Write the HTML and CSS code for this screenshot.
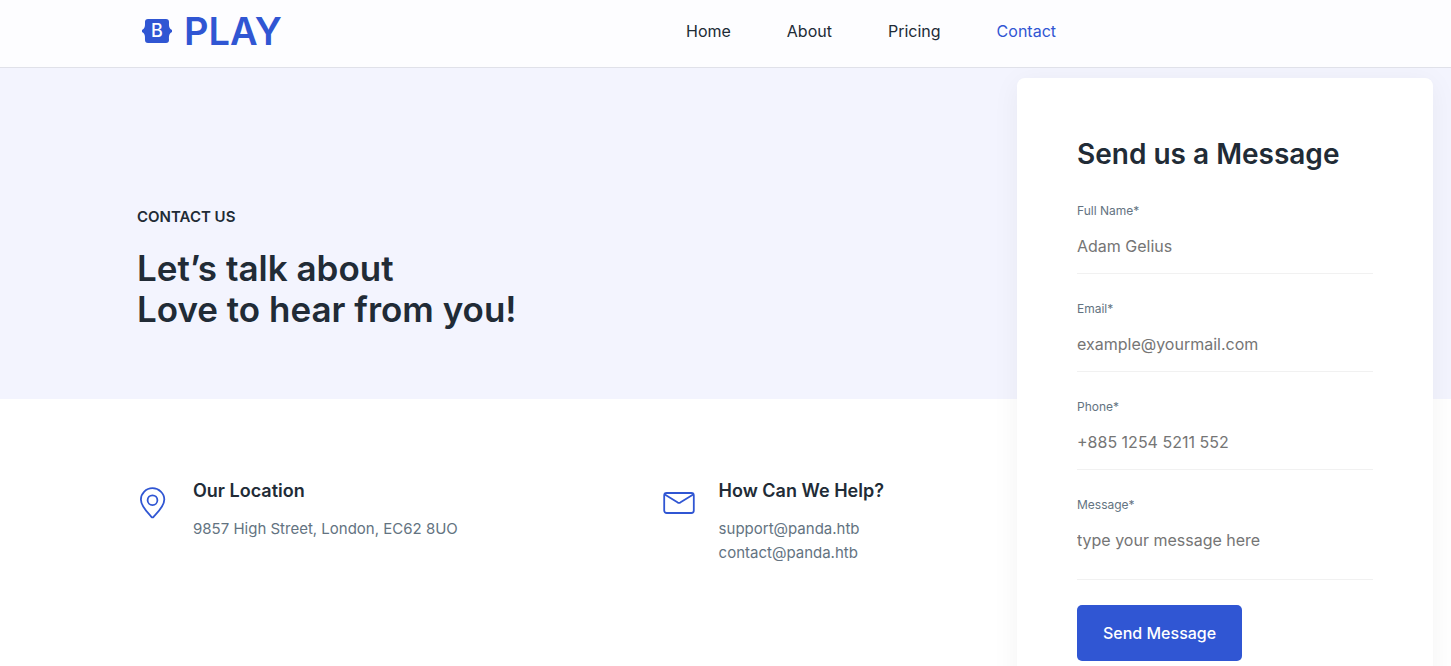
FILE: index.html
```html
<!DOCTYPE html>
<html lang="en">
<head>
<meta charset="utf-8">
<meta name="viewport" content="width=device-width, initial-scale=1">
<title>Play - Contact</title>
<link rel="stylesheet" href="styles.css">
</head>
<body>
<header class="header">
  <a class="logo" href="#" aria-label="Play">
    <svg class="logo-mark" viewBox="0 0 30 24" aria-hidden="true">
      <path d="M6 0H24Q27 0 27 3C27 6 26.500 9.500 30 11V13C26.500 14.500 27 18 27 21Q27 24 24 24H6Q3 24 3 21C3 18 3.500 14.500 0 13V11C3.500 9.500 3 6 3 3Q3 0 6 0Z" fill="#3056d3"/>
      <text class="mark-letter" x="15" y="18" text-anchor="middle">B</text>
    </svg>
    <span class="logo-name">PLAY</span>
  </a>
  <nav class="nav">
    <a href="#">Home</a>
    <a href="#">About</a>
    <a href="#">Pricing</a>
    <a class="active" href="#">Contact</a>
  </nav>
</header>
<main class="main">
  <div class="contact">
    <div class="content">
      <div class="intro">
        <p class="eyebrow">CONTACT US</p>
        <h1 class="title">Let’s talk about<br>Love to hear from you!</h1>
      </div>
      <div class="info">
        <section class="info-item">
          <svg class="info-icon" viewBox="0 0 32 32" aria-hidden="true">
            <path d="M15.500 1.200C9 1.200 3.900 6.300 3.900 12.500C3.900 19.200 10.500 25.600 14.400 29.800Q15.500 31 16.600 29.800C20.500 25.600 27.300 19.200 27.300 12.500C27.300 6.300 22 1.200 15.500 1.200Z"/>
            <circle cx="15.500" cy="13.200" r="4.900"/>
          </svg>
          <div>
            <h2 class="info-title">Our Location</h2>
            <p class="info-text">9857 High Street, London, EC62 8UO</p>
          </div>
        </section>
        <section class="info-item">
          <svg class="info-icon" viewBox="0 0 32 32" aria-hidden="true">
            <rect x="1.200" y="6" width="29.600" height="20" rx="2.500"/>
            <path d="M1.800 7.500L14.800 15.600Q16 16.300 17.200 15.600L30.200 7.500"/>
          </svg>
          <div>
            <h2 class="info-title">How Can We Help?</h2>
            <p class="info-text">support@panda.htb<br>contact@panda.htb</p>
          </div>
        </section>
      </div>
    </div>
    <form class="card">
      <h2 class="card-title">Send us a Message</h2>
      <div class="field">
        <label for="name">Full Name*</label>
        <input id="name" type="text" placeholder="Adam Gelius">
      </div>
      <div class="field">
        <label for="email">Email*</label>
        <input id="email" type="email" placeholder="example@yourmail.com">
      </div>
      <div class="field">
        <label for="phone">Phone*</label>
        <input id="phone" type="tel" placeholder="+885 1254 5211 552">
      </div>
      <div class="field">
        <label for="message">Message*</label>
        <textarea id="message" rows="1" placeholder="type your message here"></textarea>
      </div>
      <button class="submit" type="button">Send Message</button>
    </form>
  </div>
</main>
</body>
</html>
```
FILE: styles.css
```css
* {
  box-sizing: border-box;
  margin: 0;
}

body {
  display: flex;
  flex-direction: column;
  height: 100vh;
  font-family: Inter, sans-serif;
  color: #212b36;
  background: #fff;
}

.header {
  display: flex;
  flex: none;
  align-items: center;
  justify-content: space-between;
  padding: 8px 395px 13px 142px;
  background: #fdfdff;
  border-bottom: 1px solid #e0e1e9;
}

.logo {
  display: flex;
  align-items: center;
  gap: 12px;
  color: #3056d3;
  text-decoration: none;
}

.logo-mark {
  width: 30px;
  height: 24px;
}

.mark-letter {
  font-size: 18px;
  font-weight: 500;
  fill: #fff;
}

.logo-name {
  font-size: 38px;
  font-weight: 600;
  line-height: 46px;
}

.nav {
  display: flex;
  gap: 56px;
}

.nav a {
  color: #212b36;
  font-size: 16px;
  line-height: 24px;
  text-decoration: none;
}

.nav a.active {
  color: #3056d3;
}

.main {
  flex: 1;
  min-height: 0;
  overflow-y: auto;
  scrollbar-width: none;
}

.contact {
  display: grid;
  grid-template-columns: minmax(0, 1fr) 416px;
  padding: 10px 18px 60px 137px;
  background: linear-gradient(#f3f4fe 331px, #fff 331px);
}

.content {
  padding: 130px 4px 0 0;
}

.eyebrow {
  margin-bottom: 22px;
  font-size: 15px;
  font-weight: 600;
  line-height: 18px;
}

.title {
  font-size: 35px;
  font-weight: 600;
  line-height: 41px;
}

.info {
  display: grid;
  grid-template-columns: 3fr 2fr;
  margin-top: 150px;
}

.info-item {
  display: flex;
  gap: 24px;
}

.info-icon {
  flex: none;
  width: 32px;
  height: 32px;
  margin-top: 7px;
  fill: none;
  stroke: #3056d3;
  stroke-width: 1.8;
}

.info-title {
  margin-bottom: 15px;
  font-size: 18px;
  font-weight: 600;
  line-height: 22px;
}

.info-text {
  color: #637381;
  font-size: 15px;
  line-height: 24px;
}

.card {
  padding: 60px;
  background: #fff;
  border-radius: 8px;
  box-shadow: 0 4px 28px rgba(0, 0, 0, 0.05);
}

.card-title {
  margin-bottom: 32px;
  font-size: 28px;
  font-weight: 600;
  line-height: 32px;
}

.field {
  display: flex;
  flex-direction: column;
}

.field + .field {
  margin-top: 26px;
}

.field label {
  color: #637381;
  font-size: 12px;
  line-height: 18px;
}

.field input,
.field textarea {
  width: 100%;
  height: 54px;
  padding: 14px 0 15px;
  border: 0;
  border-bottom: 1px solid #f1f1f1;
  outline: 0;
  resize: none;
  background: transparent;
  color: #212b36;
  font-family: inherit;
  font-size: 16px;
  line-height: 24px;
}

.field textarea {
  height: 66px;
}

.field input::placeholder,
.field textarea::placeholder {
  color: #757575;
}

.submit {
  height: 56px;
  margin-top: 25px;
  padding: 0 26px;
  border: 0;
  border-radius: 5px;
  background: #3056d3;
  color: #fff;
  font-family: inherit;
  font-size: 16px;
  font-weight: 500;
}
```
